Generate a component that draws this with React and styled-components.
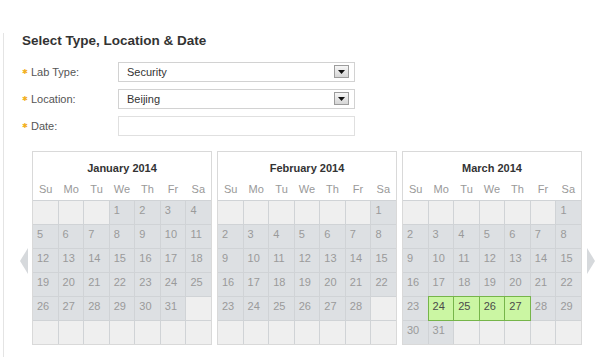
import React from 'react';
import styled, { createGlobalStyle } from 'styled-components';

const GlobalStyle = createGlobalStyle`
  body {
    margin: 0;
    background: #fff;
    font-family: "Liberation Sans", Arial, sans-serif;
  }
`;

const Panel = styled.div`
  margin: 33px 0 0 3px;
  min-height: 324px;
  border-left: 1px solid #e4e4e4;
  padding-left: 18px;
`;

const Title = styled.h2`
  margin: 0;
  font-size: 13.5px;
  line-height: 16px;
  font-weight: bold;
  color: #333;
`;

const Form = styled.div`
  margin-top: 13px;
  display: flex;
  flex-direction: column;
  gap: 7px;
`;

const FieldRow = styled.div`
  display: flex;
  align-items: center;
  height: 20px;
`;

const Label = styled.label`
  width: 96px;
  display: flex;
  align-items: center;
  font-size: 11px;
  color: #555;
`;

const Star = styled.span`
  width: 9px;
  font-size: 7px;
  color: #f2b01e;
`;

const Field = styled.div`
  position: relative;
  box-sizing: border-box;
  width: 237px;
  height: 20px;
  border: 1px solid ${(p) => (p.$light ? '#e0e0e0' : '#d2d2d2')};
  background: #fff;
  padding-left: 8px;
  font-size: 11px;
  line-height: 18px;
  color: #333;
`;

const DropButton = styled.span`
  position: absolute;
  right: 5px;
  top: 2px;
  box-sizing: border-box;
  width: 15px;
  height: 13px;
  border: 1px solid #9c9c9c;
  background: linear-gradient(#f6f6f6, #d6d6d6);
  display: flex;
  align-items: center;
  justify-content: center;
`;

const CalendarRow = styled.div`
  margin: 15px 0 0 -4px;
  display: flex;
  align-items: flex-start;
`;

const Arrow = styled.svg`
  flex: none;
  margin-top: 97px;
  margin-left: ${(p) => (p.$right ? '5px' : '0')};
`;

const Months = styled.div`
  display: flex;
  gap: 5px;
`;

const Month = styled.div`
  box-sizing: border-box;
  width: 180px;
  border: 1px solid #d9d9d9;
  background: #fff;
`;

const MonthTitle = styled.div`
  height: 26px;
  padding-top: 8px;
  box-sizing: border-box;
  text-align: center;
  font-size: 11px;
  line-height: 16px;
  font-weight: bold;
  color: #333;
`;

const Weekdays = styled.div`
  display: grid;
  grid-template-columns: repeat(7, 1fr);
  height: 22px;
  line-height: 22px;
  font-size: 11px;
  color: #999;
  text-align: center;
`;

const DayGrid = styled.div`
  display: grid;
  grid-template-columns: repeat(7, 1fr);
  grid-auto-rows: 23px;
  gap: 1px;
  padding-top: 1px;
  background: #d0d3d6;
`;

const Day = styled.div`
  position: relative;
  padding: 2px 0 0 4px;
  font-size: 11px;
  line-height: 14px;
  color: ${(p) => (p.$picked ? '#4a4a4a' : '#9a9a9a')};
  background: ${(p) => (p.$picked ? '#cbf6a3' : p.$empty ? '#efefef' : '#dde0e3')};
  box-shadow: ${(p) => (p.$picked ? '0 0 0 1px #76b54a' : 'none')};
  z-index: ${(p) => (p.$picked ? 1 : 0)};
`;

const months = [
  { name: 'January 2014', offset: 3, days: 31 },
  { name: 'February 2014', offset: 6, days: 28 },
  { name: 'March 2014', offset: 6, days: 31, picked: [24, 25, 26, 27] },
];

const weekdays = ['Su', 'Mo', 'Tu', 'We', 'Th', 'Fr', 'Sa'];

const MonthView = ({ month }) => {
  const cells = [];
  for (let i = 0; i < 42; i++) {
    const d = i - month.offset + 1;
    cells.push(d >= 1 && d <= month.days ? d : null);
  }
  return (
    <Month>
      <MonthTitle>{month.name}</MonthTitle>
      <Weekdays>
        {weekdays.map((w) => (
          <span key={w}>{w}</span>
        ))}
      </Weekdays>
      <DayGrid>
        {cells.map((d, i) => (
          <Day key={i} $empty={!d} $picked={d && month.picked && month.picked.includes(d)}>
            {d}
          </Day>
        ))}
      </DayGrid>
    </Month>
  );
};

const Caret = () => (
  <svg width="7" height="4" viewBox="0 0 7 4">
    <path d="M0 0h7L3.5 4z" fill="#111" />
  </svg>
);

const App = () => (
  <>
    <GlobalStyle />
    <Panel>
      <Title>Select Type, Location &amp; Date</Title>
      <Form>
        <FieldRow>
          <Label><Star>✱</Star>Lab Type:</Label>
          <Field>Security<DropButton><Caret /></DropButton></Field>
        </FieldRow>
        <FieldRow>
          <Label><Star>✱</Star>Location:</Label>
          <Field>Beijing<DropButton><Caret /></DropButton></Field>
        </FieldRow>
        <FieldRow>
          <Label><Star>✱</Star>Date:</Label>
          <Field $light />
        </FieldRow>
      </Form>
      <CalendarRow>
        <Arrow width="14" height="26" viewBox="0 0 14 26">
          <path d="M10 0L2 13l8 13z" fill="#d6d9dc" />
        </Arrow>
        <Months>
          {months.map((m) => (
            <MonthView key={m.name} month={m} />
          ))}
        </Months>
        <Arrow $right width="9" height="26" viewBox="0 0 9 26">
          <path d="M0 0l8 13-8 13z" fill="#d6d9dc" />
        </Arrow>
      </CalendarRow>
    </Panel>
  </>
);

export default App;
